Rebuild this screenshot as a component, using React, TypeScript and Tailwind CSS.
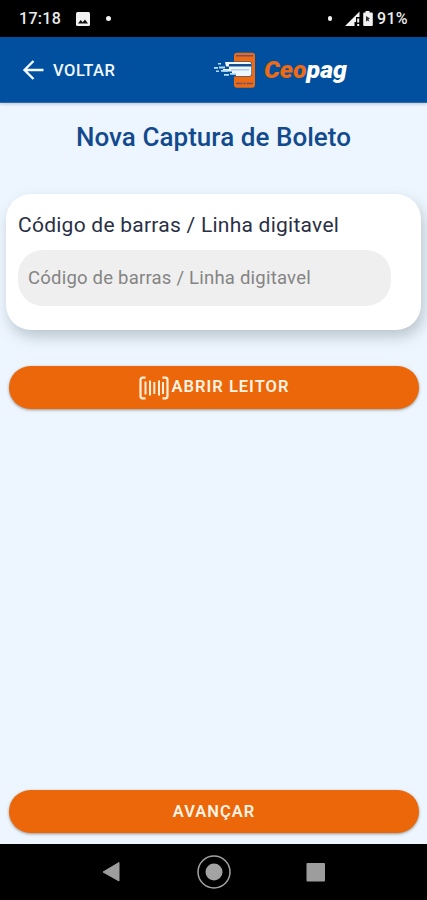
import React from "react";

function StatusBar() {
  return (
    <div className="flex h-[37px] shrink-0 items-center justify-between bg-black pl-[19px] pr-[18px] text-[16px] font-medium text-[#ececec]">
      <div className="flex items-center">
        <span className="w-[43px] whitespace-nowrap tracking-[0.3px]">17:18</span>
        <svg className="ml-[14px]" width="14" height="14" viewBox="0 0 14 14">
          <rect width="14" height="14" rx="1.5" fill="#f2f2f2" />
          <path d="M2 11.5 4.7 8l2 2.2L9 7.500l3 4z" fill="#111" />
        </svg>
        <span className="ml-[16px] size-[5px] rounded-full bg-[#f2f2f2]" />
      </div>
      <div className="flex items-center">
        <span className="mr-[13px] size-[4.5px] rounded-full bg-[#f2f2f2]" />
        <svg width="30" height="18" viewBox="0 0 30 18">
          <path d="M0 16 14.500 1.500V7H11v5H9.500v4z" fill="#f2f2f2" />
          <path d="M12.200 8.500h2v4h-2zM12.200 14h2v2h-2z" fill="#f2f2f2" />
          <path d="M20.500 1h4v1.500h2.300a1 1 0 0 1 1 1V15a1 1 0 0 1-1 1h-7.600a1 1 0 0 1-1-1V3.500a1 1 0 0 1 1-1h1.300z" fill="#f2f2f2" />
          <path d="M21 6l4 2.500-1.500.8 1 2.500-1.700-1.300-1.800 1z" fill="#333" />
        </svg>
        <span className="ml-[2px] w-[32px] whitespace-nowrap tracking-[0.3px]">91%</span>
      </div>
    </div>
  );
}

function Logo() {
  return (
    <svg width="136" height="40" viewBox="0 0 136 40" role="img" aria-label="Ceopag">
      <rect x="20" y="2.700" width="21" height="35" rx="3" fill="#ee6b14" />
      <path d="M22 5h17v1.500H22zM22 32.800h17v1.500H22z" fill="#715070" />
      <circle cx="30.500" cy="33.500" r="2" fill="#ee6b14" />
      <circle cx="30.500" cy="33.500" r="1" fill="#4c5487" />
      <path d="M20 11.500h15.500a2.300 2.300 0 0 1 2.300 2.300v10.400a2.300 2.300 0 0 1-2.300 2.300H20z" fill="#00509f" />
      <path d="M11 12h24.300a2 2 0 0 1 2 2v10a2 2 0 0 1-2 2H22v-1.800h-4v-2.700H9v-2.500h6v-2.500h-3z" fill="#eef7ff" />
      <path d="M15 14h22.300v2.500H15z" fill="#164c91" />
      <path d="M17 19.200h18v1.200H17z" fill="#9fc4e3" />
      <path d="M4 13h3v1.500H4zM0 17h4v1.700H0zM5 16.500h6v2H5zM2 20.500h3V22H2zM7 20h7v1.800H7zM10 24h5v1.700h-5zM16 23h6v1.700h-6z" fill="#b9ddf5" />
      <text x="50" y="27.500" fontSize="24" fontWeight="900" fontStyle="italic" textLength="83" lengthAdjust="spacingAndGlyphs" fontFamily="Roboto, sans-serif">
        <tspan fill="#ee6b14">Ceo</tspan>
        <tspan fill="#ffffff">pag</tspan>
      </text>
    </svg>
  );
}

function Header() {
  return (
    <header className="flex h-[66px] shrink-0 items-center border-b border-[#35699f] bg-[#00509f] pl-[22px] shadow-[0_1px_3px_rgba(0,40,90,0.25)]">
      <button className="flex items-center text-[16.5px] font-medium text-[#f2f8ff]">
        <svg width="22" height="22" viewBox="0 0 22 22" fill="none" stroke="currentColor" strokeWidth="2.400">
          <path d="M21.500 11H2.500M11.500 2 2.500 11l9 9" />
        </svg>
        <span className="ml-[9px] w-[64px] whitespace-nowrap pt-[3px] text-left leading-[22px] tracking-[0.500px]">VOLTAR</span>
      </button>
      <div className="ml-[97px]">
        <Logo />
      </div>
    </header>
  );
}

function BarcodeIcon() {
  return (
    <svg width="30" height="24" viewBox="0 0 30 24" fill="none" stroke="#fff0dc">
      <path d="M6.500 1.700H3.500a2 2 0 0 0-2 2v16.600a2 2 0 0 0 2 2h3M23.500 1.700h3a2 2 0 0 1 2 2v16.600a2 2 0 0 1-2 2h-3" strokeWidth="2.200" />
      <path d="M6.500 5.500v13M11 4.500v15M20 4.500v15" strokeWidth="2" />
      <path d="M15.300 6v12M24 6v12" strokeWidth="2" />
    </svg>
  );
}

function PrimaryButton({ children }: { children: React.ReactNode }) {
  return (
    <button className="flex h-[43px] w-full shrink-0 items-center justify-center rounded-full bg-[#eb6709] text-[16.5px] font-semibold tracking-[1px] text-[#fff3e4] shadow-[0_1px_3px_rgba(70,50,30,0.5)]">
      {children}
    </button>
  );
}

function NavigationBar() {
  return (
    <nav className="flex h-[56px] shrink-0 items-center justify-center gap-[75px] bg-black">
      <svg width="34" height="34" viewBox="0 0 34 34">
        <path d="M24 7.500v18.500L8 17z" fill="#9d9d9d" stroke="#9d9d9d" strokeLinejoin="round" />
      </svg>
      <svg className="-mx-[7px]" width="34" height="34" viewBox="0 0 34 34">
        <circle cx="17" cy="17" r="16" fill="none" stroke="#a3a3a3" strokeWidth="1.500" />
        <circle cx="17" cy="17" r="8.500" fill="#a3a3a3" />
      </svg>
      <svg width="34" height="34" viewBox="0 0 34 34">
        <rect x="7.500" y="8" width="18.500" height="18.500" rx="1" fill="#9d9d9d" />
      </svg>
    </nav>
  );
}

export default function App() {
  return (
    <div className="flex h-[900px] w-full flex-col overflow-hidden bg-[#edf6ff] font-[Roboto,sans-serif]">
      <StatusBar />
      <Header />
      <main className="flex grow flex-col">
        <h1 className="mt-[16px] text-center text-[26px] font-medium leading-[36px] tracking-[0.050px] text-[#134a8e]">
          Nova Captura de Boleto
        </h1>
        <section className="ml-[6px] mr-[6px] mt-[39px] h-[136px] rounded-[25px] bg-white pl-[12px] pt-[16px] shadow-[3px_7px_14px_rgba(95,110,115,0.35)]">
          <label htmlFor="codigo" className="block whitespace-nowrap text-[21px] leading-[30px] tracking-[0.250px] text-[#292f44]">
            Código de barras / Linha digitavel
          </label>
          <input
            id="codigo"
            className="mt-[10px] block h-[56px] w-[373px] rounded-[25px] bg-[#efefef] px-[10px] text-[18.500px] tracking-[0.220px] outline-none placeholder:text-[#848484]"
            placeholder="Código de barras / Linha digitavel"
          />
        </section>
        <div className="mt-[36px] pl-[9px] pr-[8px]">
          <PrimaryButton>
            <BarcodeIcon />
            <span className="ml-[3px]">ABRIR LEITOR</span>
          </PrimaryButton>
        </div>
        <div className="mb-[11px] mt-auto pl-[9px] pr-[8px]">
          <PrimaryButton>
            <span className="pt-px leading-[22px]">AVANÇAR</span>
          </PrimaryButton>
        </div>
      </main>
      <NavigationBar />
    </div>
  );
}
